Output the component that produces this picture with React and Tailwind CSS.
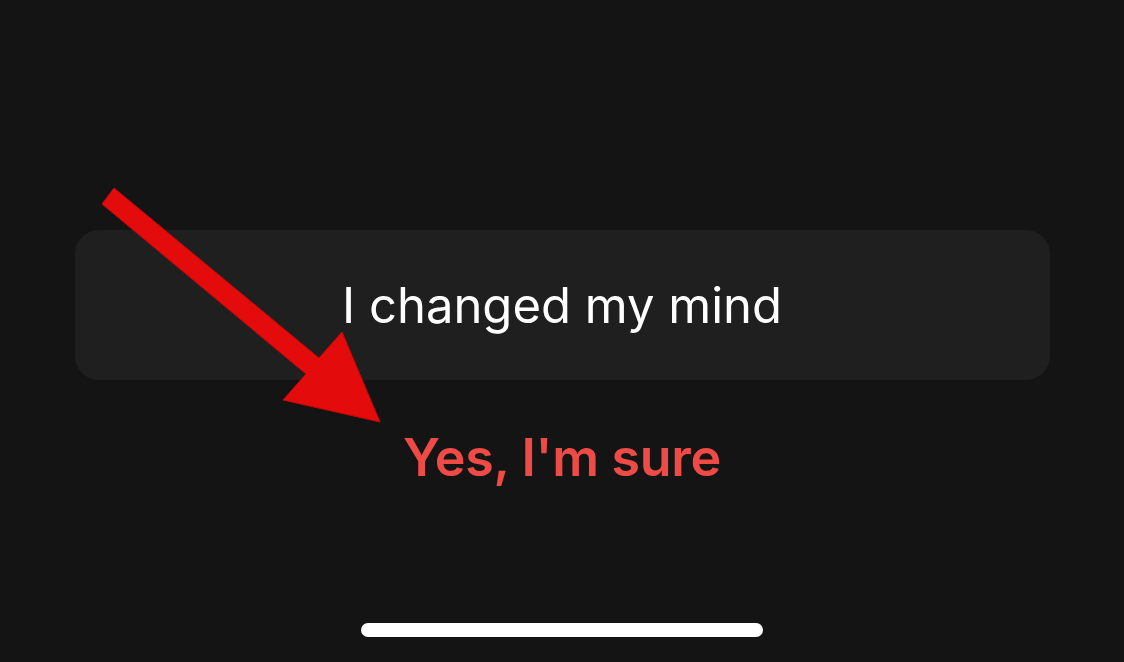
export default function App() {
  return (
    <div
      className="relative w-full h-[662px] bg-[#141414] flex flex-col items-center overflow-hidden"
      style={{ fontFamily: "Inter, 'Noto Sans', sans-serif" }}
    >
      {/* Cancel action */}
      <button className="mt-[230px] w-[975px] h-[150px] rounded-[24px] bg-[#1f1f1f] flex items-center justify-center">
        <span className="text-white text-[49px] tracking-[0px] leading-none">I changed my mind</span>
      </button>

      {/* Destructive action */}
      <button className="mt-[50px] h-[56px] flex items-center justify-center">
        <span className="text-[#ef4b46] text-[52px] font-semibold tracking-[-0.3px] leading-none">Yes, I'm sure</span>
      </button>

      {/* Home indicator */}
      <div className="mt-auto mb-[25px] w-[402px] h-[14px] rounded-full bg-white" />

      {/* Annotation arrow */}
      <svg className="absolute inset-0 pointer-events-none" width="1124" height="662" viewBox="0 0 1124 662">
        <polygon
          points="114,188 319,358 342,332 380,422 283,400 306,374 102,204"
          fill="#e30b0b"
          stroke="#c40808"
          strokeWidth="1"
          strokeLinejoin="miter"
        />
      </svg>
    </div>
  );
}
